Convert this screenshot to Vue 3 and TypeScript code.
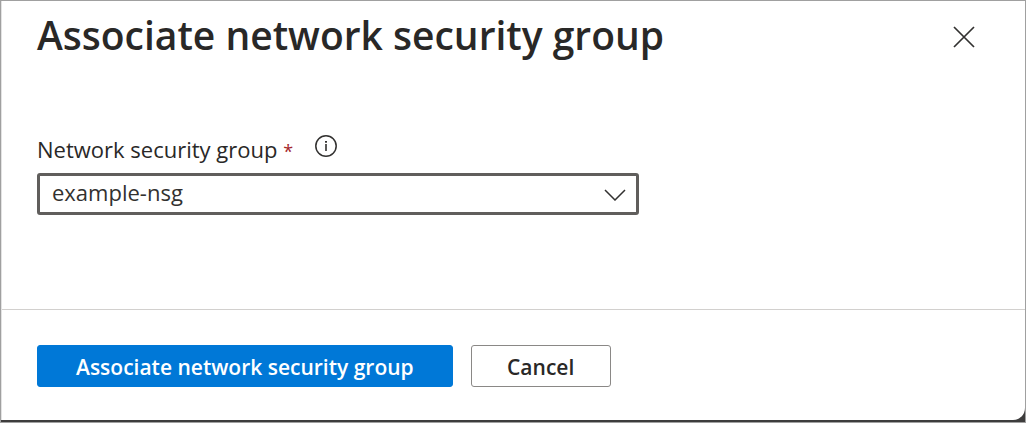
<script setup lang="ts">
import { ref } from 'vue'

const groups: string[] = ['example-nsg']
const selected = ref<string>(groups[0])
</script>

<template>
  <div class="frame">
    <main class="panel">
      <header class="header">
        <h1 class="title">Associate network security group</h1>
        <button class="close" type="button" aria-label="Close">
          <svg width="22" height="22" viewBox="0 0 22 22" aria-hidden="true">
            <path d="M1 1L21 21M21 1L1 21" fill="none" stroke="#323130" stroke-width="1.7" />
          </svg>
        </button>
      </header>
      <section class="body">
        <div class="label-row">
          <label class="label" for="nsg">Network security group <span class="required">*</span></label>
          <button class="info" type="button" aria-label="More information">
            <svg width="24" height="24" viewBox="0 0 24 24" aria-hidden="true">
              <circle cx="12" cy="12" r="10.2" fill="none" stroke="#323130" stroke-width="1.5" />
              <rect x="11.2" y="10" width="1.6" height="7" fill="#323130" />
              <rect x="11" y="7" width="2" height="1.7" fill="#323130" />
            </svg>
          </button>
        </div>
        <div class="select-wrap">
          <select id="nsg" v-model="selected" class="select" required>
            <option v-for="group in groups" :key="group" :value="group">{{ group }}</option>
          </select>
          <svg class="chevron" width="22" height="12" viewBox="0 0 22 12" aria-hidden="true">
            <path d="M1 1L11 11L21 1" fill="none" stroke="#323130" stroke-width="1.5" />
          </svg>
        </div>
      </section>
      <footer class="footer">
        <button class="button primary" type="button">Associate network security group</button>
        <button class="button" type="button">Cancel</button>
      </footer>
    </main>
  </div>
</template>

<style>
body {
  margin: 0;
}
</style>

<style scoped>
.frame {
  box-sizing: border-box;
  min-height: 100vh;
  display: flex;
  flex-direction: column;
  padding-bottom: 2px;
  border: 1px solid #a0a0a0;
  background: #3d3c3c;
  color: #292827;
  font-family: "Segoe UI", "Open Sans", "Noto Sans", sans-serif;
}

.panel {
  flex: 1;
  display: flex;
  flex-direction: column;
  border-left: 1px solid #e3e3e3;
  border-bottom-right-radius: 12px;
  background: #fff;
}

.header {
  display: flex;
  align-items: flex-start;
  justify-content: space-between;
  padding: 6px 46px 0 35px;
}

.title {
  margin: 0;
  font-size: 39px;
  font-weight: 600;
  line-height: 56px;
}

.close,
.info {
  display: flex;
  padding: 0;
  border: 0;
  background: none;
  cursor: pointer;
}

.close {
  margin-top: 15px;
  padding: 4px;
}

.body {
  flex: 1;
  padding: 70px 35px 0;
}

.label-row {
  display: flex;
  align-items: flex-start;
  gap: 21px;
}

.label {
  padding-bottom: 8px;
  font-size: 22px;
  line-height: 32px;
}

.info {
  margin-top: 1px;
}

.required {
  color: #a4262c;
  font-size: 18px;
  line-height: 1;
}

.select-wrap {
  position: relative;
  max-width: 602px;
}

.select {
  display: block;
  width: 100%;
  height: 42px;
  padding: 0 48px 4px 12px;
  border: 3px solid #605e5c;
  border-radius: 3px;
  appearance: none;
  background: #fff;
  color: #323130;
  font-family: inherit;
  font-size: 22px;
}

.chevron {
  position: absolute;
  top: 16px;
  right: 13px;
  pointer-events: none;
}

.footer {
  display: flex;
  gap: 18px;
  padding: 35px 35px 33px;
  border-top: 1px solid #d2d0ce;
}

.button {
  min-width: 140px;
  height: 42px;
  padding: 2px 32px 0;
  border: 1px solid #8a8886;
  border-radius: 3px;
  background: #fff;
  color: #292827;
  font-family: inherit;
  font-size: 21px;
  font-weight: 600;
  line-height: 38px;
  cursor: pointer;
}

.primary {
  padding: 2px 38px 0;
  border-color: #0078d7;
  background: #0078d7;
  color: #fff;
}
</style>
